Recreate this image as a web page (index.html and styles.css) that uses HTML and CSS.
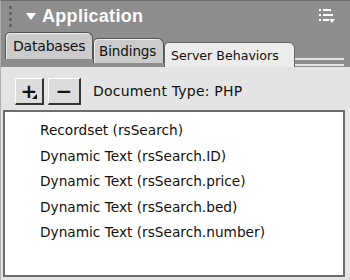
FILE: index.html
```html
<!DOCTYPE html>
<html>
<head>
<meta charset="utf-8">
<link rel="stylesheet" href="styles.css">
</head>
<body>
<div class="panel">
  <div class="titlebar">
    <div class="grip"><span></span><span></span><span></span><span></span></div>
    <svg class="arrow" width="10" height="8" viewBox="0 0 10 8"><path d="M0 0 H10 L5 7 Z" fill="#fff"/></svg>
    <span class="title">Application</span>
    <svg class="menu" width="18" height="16" viewBox="0 0 18 16">
      <rect x="1" y="1" width="2" height="2" fill="#fff"/><rect x="5" y="1" width="8" height="2" fill="#fff"/>
      <rect x="1" y="6" width="2" height="2" fill="#fff"/><rect x="5" y="6" width="10" height="2" fill="#fff"/>
      <rect x="1" y="11" width="2" height="2" fill="#fff"/><rect x="5" y="11" width="6" height="2" fill="#fff"/>
      <path d="M11 11 H17 L14 15 Z" fill="#fff"/>
    </svg>
  </div>
  <div class="tabs">
    <div class="tab t1">Databases</div>
    <div class="tab t2">Bindings</div>
    <div class="tab active">Server Behaviors</div>
    <div class="tabfill"></div>
  </div>
  <div class="body">
    <div class="toolbar">
      <div class="btn plus">+<span class="corner"></span></div>
      <div class="btn minus">−</div>
      <span class="doctype">Document Type: PHP</span>
    </div>
    <div class="list">
      <div class="item">Recordset (rsSearch)</div>
      <div class="item">Dynamic Text (rsSearch.ID)</div>
      <div class="item">Dynamic Text (rsSearch.price)</div>
      <div class="item">Dynamic Text (rsSearch.bed)</div>
      <div class="item">Dynamic Text (rsSearch.number)</div>
    </div>
  </div>
</div>
</body>
</html>
```
FILE: styles.css
```css
html, body { margin: 0; padding: 0; background: #e4e4e4; }
body { width: 350px; height: 280px; overflow: hidden; font-family: "DejaVu Sans", "Liberation Sans", sans-serif; }
.panel { width: 350px; height: 280px; background: #8e8e8e; box-sizing: border-box; border-top: 1px solid #6a6a6a; border-left: 1px solid #b0b0b0; display: flex; flex-direction: column; }
.titlebar { height: 30px; display: flex; align-items: center; box-sizing: border-box; padding: 0 0 0 8px; }
.grip { display: flex; flex-direction: column; gap: 3px; width: 4px; margin-right: 13px; }
.grip span { width: 3px; height: 3px; background: #606060; border-radius: 1px; }
.arrow { margin-right: 6px; margin-top: 1px; }
.title { color: #fff; font-weight: bold; font-size: 18px; font-family: "Liberation Sans", sans-serif; letter-spacing: 0.3px; flex: 1; }
.menu { margin-right: 14px; }
.tabs { height: 36px; display: flex; align-items: flex-end; padding-left: 4px; box-sizing: border-box; }
.tab { color: #111; background: #cbcbcb; border: 1px solid #555; border-bottom: none; border-radius: 5px 6px 0 0; padding: 0 5px; box-sizing: border-box; display: flex; align-items: center; box-shadow: inset 1px 1px 0 #eee; }
.t1 { height: 27px; margin-bottom: 8px; width: 88px; padding-left: 7px; font-size: 14px; letter-spacing: -0.2px; }
.t2 { height: 25px; margin-bottom: 4px; width: 71px; font-size: 13.5px; letter-spacing: -0.1px; }
.active { height: 25px; background: #ececec; width: 131px; padding-left: 6px; border-color: #666; font-size: 12.6px; }
.tabfill { flex: 1; height: 8px; margin-bottom: 1px; border-top: 2px solid #e4e4e4; border-bottom: 2px solid #e4e4e4; box-sizing: border-box; background: #8e8e8e; margin-right: 6px; }
.body { flex: 1; background: #e4e4e4; display: flex; flex-direction: column; padding: 0 5px 3px 2px; }
.toolbar { height: 43px; display: flex; align-items: center; padding-left: 12px; padding-top: 5px; box-sizing: border-box; }
.btn { position: relative; width: 29px; height: 27px; box-sizing: border-box; border-right: 2px solid #333; border-bottom: 2px solid #333; border-top: 1px solid #fff; border-left: 1px solid #fff; background: #dcdcdc; font-weight: bold; font-size: 20px; display: flex; align-items: center; justify-content: center; color: #111; line-height: 1; }
.minus { margin-left: 4px; width: 33px; }
.corner { position: absolute; right: 5px; bottom: 4px; width: 0; height: 0; border-left: 5px solid transparent; border-bottom: 5px solid #111; }
.doctype { font-size: 14px; color: #111; margin-left: 12px; letter-spacing: 0.2px; }
.list { flex: 1; background: #fff; border: 2px solid #6c6c6c; padding: 9px 0 0 35px; }
.item { font-size: 13.7px; color: #111; height: 25.5px; line-height: 18px; }
```
